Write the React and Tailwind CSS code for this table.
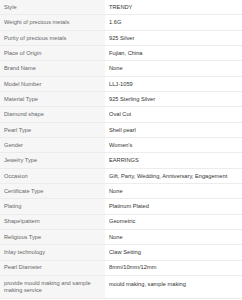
const specs = [
  ['Style', 'TRENDY'],
  ['Weight of precious metals', '1.6G'],
  ['Purity of precious metals', '925 Silver'],
  ['Place of Origin', 'Fujian, China'],
  ['Brand Name', 'None'],
  ['Model Number', 'LLJ-1059'],
  ['Material Type', '925 Sterling Silver'],
  ['Diamond shape', 'Oval Cut'],
  ['Pearl Type', 'Shell pearl'],
  ['Gender', "Women's"],
  ['Jewelry Type', 'EARRINGS'],
  ['Occasion', 'Gift, Party, Wedding, Anniversary, Engagement'],
  ['Certificate Type', 'None'],
  ['Plating', 'Platinum Plated'],
  ['Shape\\pattern', 'Geometric'],
  ['Religious Type', 'None'],
  ['Inlay technology', 'Claw Setting'],
  ['Pearl Diameter', '8mm/10mm/12mm'],
];

export default function App() {
  return (
    <div className="w-[242px] h-[300px] overflow-hidden bg-white font-['Liberation_Sans',Arial,sans-serif] text-[5.7px]">
      {specs.map(([label, value]) => (
        <div key={label} className="flex h-[15.33px] border-b border-[#ececec]">
          <div className="flex w-[105px] shrink-0 items-center bg-[#f6f6f6] pl-[4px] text-[#666]">
            {label}
          </div>
          <div className="flex flex-1 items-center pl-[4px] text-[#333]">{value}</div>
        </div>
      ))}
      <div className="flex h-[23px] border-b border-[#ececec]">
        <div className="flex w-[105px] shrink-0 items-center bg-[#f6f6f6] pl-[4px] pr-[6px] leading-[7px] text-[#666]">
          provide mould making and sample making service
        </div>
        <div className="flex-1 pl-[4px] pt-[5px] leading-[7px] text-[#333]">mould making, sample making</div>
      </div>
    </div>
  );
}
